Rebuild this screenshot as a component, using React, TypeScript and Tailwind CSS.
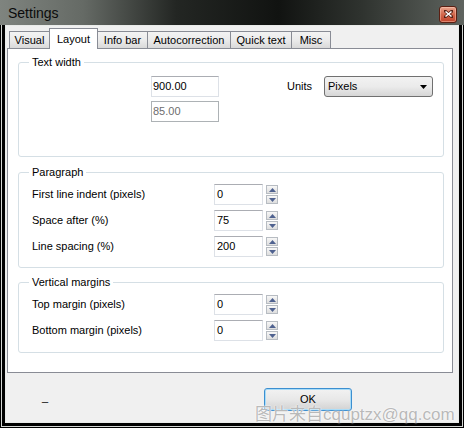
import React from 'react';

const ui = "font-['Liberation_Sans',Arial,sans-serif]";

function Spinner() {
  return (
    <div className="flex flex-col gap-[1px] ml-[3px]">
      {[0, 1].map((i) => (
        <div
          key={i}
          className="w-[12px] h-[9px] border border-[#b7bcc2] bg-gradient-to-b from-[#f7f7f7] to-[#dedede] flex items-center justify-center"
        >
          <svg width="7" height="4" viewBox="0 0 7 4">
            {i === 0 ? (
              <polygon points="0,4 7,4 3.5,0" fill="#4f6290" />
            ) : (
              <polygon points="0,0 7,0 3.5,4" fill="#4f6290" />
            )}
          </svg>
        </div>
      ))}
    </div>
  );
}

function NumField({ value }: { value: string }) {
  return (
    <div className="flex items-center">
      <div className="w-[49px] h-[21px] border border-[#dde1e7] border-t-[#abadb3] bg-white flex items-center pl-[2px] text-[11px] text-black">
        {value}
      </div>
      <Spinner />
    </div>
  );
}

function Row({ label, value }: { label: string; value: string }) {
  return (
    <div className="flex items-center h-[21px]">
      <span className="w-[182px] text-[11px] text-black">{label}</span>
      <NumField value={value} />
    </div>
  );
}

function Group({
  title,
  className,
  children,
}: {
  title: string;
  className: string;
  children: React.ReactNode;
}) {
  return (
    <fieldset className={`border border-[#d5dfe5] rounded-[3px] p-0 mx-0 ${className}`}>
      <legend className="ml-[10px] px-[3px] text-[11px] leading-[14px] text-black">{title}</legend>
      {children}
    </fieldset>
  );
}

const tabs = [
  { name: 'Visual', w: 'w-[41px]' },
  { name: 'Layout', w: 'w-[49px]' },
  { name: 'Info bar', w: 'w-[51px]' },
  { name: 'Autocorrection', w: 'w-[84px]' },
  { name: 'Quick text', w: 'w-[62px]' },
  { name: 'Misc', w: 'w-[40px]' },
];

export default function App() {
  return (
    <div className={`relative w-[464px] h-[428px] bg-black px-[1px] pb-[1px] flex flex-col ${ui}`}>
      {/* Title bar */}
      <div className="h-[25px] -mx-[1px] flex items-center justify-between pl-[8px] pr-[7px] bg-[linear-gradient(to_right,#7f847f_0%,#656a65_18%,#232623_38%,#111311_60%,#2f332f_78%,#5f645f_100%)]">
        <span className="text-[14px] text-[#0b0b0b] leading-none mt-[1px]">Settings</span>
        <div className="w-[18px] h-[17px] mt-[3px] rounded-[3px] border border-[#5b1f12] bg-gradient-to-b from-[#e9a48e] via-[#d2674b] to-[#c2422a] flex items-center justify-center shadow-[inset_0_0_0_1px_rgba(255,210,190,0.45)]">
          <svg width="9" height="8" viewBox="0 0 9 8">
            <path d="M1 1 L8 7 M8 1 L1 7" stroke="#5a2417" strokeWidth="3" strokeLinecap="square" />
            <path d="M1.5 1.5 L7.5 6.5 M7.5 1.5 L1.5 6.5" stroke="#ffffff" strokeWidth="1.6" />
          </svg>
        </div>
      </div>

      {/* Window frame rings */}
      <div className="flex-1 flex flex-col border-x border-b border-[#d3d6d3]">
        <div className="flex-1 flex flex-col border-x-[3px] border-b-[3px] border-black">
          <div className="flex-1 flex flex-col border border-[#e9ebe9] bg-[#f0f0f0]">
            {/* Tabs */}
            <div className="h-[22px] flex items-end pl-[3px] relative z-10">
              {tabs.map((t, i) => {
                const active = t.name === 'Layout';
                return (
                  <div
                    key={t.name}
                    className={`${t.w} ${i > 0 ? '-ml-px' : ''} border-t border-x border-[#898c95] text-[11px] text-black flex items-center justify-center ${
                      active
                        ? 'h-[21px] -mb-px bg-white relative z-10'
                        : 'h-[17px] bg-gradient-to-b from-[#f3f3f3] via-[#ebebeb] to-[#d9d9d9]'
                    }`}
                  >
                    {t.name}
                  </div>
                );
              })}
            </div>

            {/* Tab page */}
            <div className="ml-[1px] w-[446px] h-[325px] border border-[#898c95] bg-white pt-[6px] pl-[10px] pr-[8px]">
              <Group title="Text width" className="h-[102px]">
                <div className="flex items-start pl-[132px] pt-[7px]">
                  <div className="flex flex-col gap-[4px]">
                    <div className="w-[68px] h-[21px] border border-[#dde1e7] border-t-[#abadb3] bg-white flex items-center pl-[1px] text-[11px] text-black">
                      900.00
                    </div>
                    <div className="w-[68px] h-[21px] border border-[#adb2b5] bg-white flex items-center pl-[1px] text-[11px] text-[#6d6d6d]">
                      85.00
                    </div>
                  </div>
                  <span className="ml-[68px] w-[37px] h-[21px] flex items-center text-[11px] text-black">Units</span>
                  <div className="w-[109px] h-[21px] rounded-[3px] border border-[#707070] bg-gradient-to-b from-[#f2f2f2] via-[#ebebeb] to-[#d6d6d6] flex items-center justify-between pl-[3px] pr-[5px] text-[11px] text-black">
                    <span>Pixels</span>
                    <svg width="7" height="4" viewBox="0 0 7 4">
                      <polygon points="0,0 7,0 3.5,4" fill="#000" />
                    </svg>
                  </div>
                </div>
              </Group>

              <Group title="Paragraph" className="h-[103px] mt-[8px]">
                <div className="flex flex-col gap-[5px] pl-[13px] pt-[5px]">
                  <Row label="First line indent (pixels)" value="0" />
                  <Row label="Space after (%)" value="75" />
                  <Row label="Line spacing (%)" value="200" />
                </div>
              </Group>

              <Group title="Vertical margins" className="h-[78px] mt-[7px]">
                <div className="flex flex-col gap-[5px] pl-[13px] pt-[5px]">
                  <Row label="Top margin (pixels)" value="0" />
                  <Row label="Bottom margin (pixels)" value="0" />
                </div>
              </Group>
            </div>

            {/* Bottom bar */}
            <div className="flex-1 flex items-start justify-between pl-[36px] pr-[106px]">
              <span className="mt-[18px] text-[11px] leading-[13px] text-black">_</span>
              <button className="mt-[15px] w-[88px] h-[23px] rounded-[3px] border border-[#3c8fd0] bg-gradient-to-b from-[#f2f2f2] via-[#e8e8e8] to-[#d2d2d2] shadow-[inset_0_0_0_1px_#a8dcf8] text-[11px] text-black">
                OK
              </button>
            </div>
          </div>
        </div>
      </div>

      {/* Credit stamp laid over the corner */}
      <div className="absolute left-[255px] top-[405px] text-[17px] leading-[20px] text-[#b9b9b9] font-['Liberation_Sans','Noto_Sans_CJK_SC',sans-serif] [text-shadow:0_0_2px_#fff,0_0_1px_#fff]">
        图片来自cquptzx@qq.com
      </div>
    </div>
  );
}
